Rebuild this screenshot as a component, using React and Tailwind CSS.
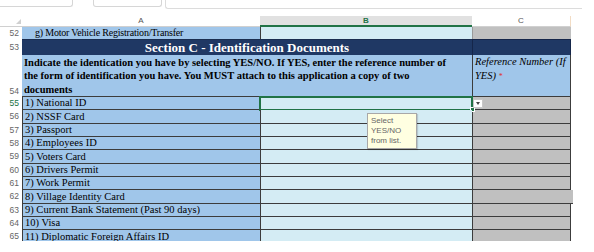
import React from 'react';

const serif = "font-['Liberation_Serif',serif]";
const sans = "font-['Liberation_Sans',sans-serif]";

const idRows = [
    { n: 55, label: '1) National ID', selected: true },
    { n: 56, label: '2) NSSF Card' },
    { n: 57, label: '3) Passport' },
    { n: 58, label: '4) Employees ID' },
    { n: 59, label: '5) Voters Card' },
    { n: 60, label: '6) Drivers Permit' },
    { n: 61, label: '7) Work Permit' },
    { n: 62, label: '8) Village Identity Card', open: true },
    { n: 63, label: '9) Current Bank Statement (Past 90 days)' },
    { n: 64, label: '10) Visa' },
    { n: 65, label: '11) Diplomatic Foreign Affairs ID' },
];

const RowNum = ({ n, green, align = 'items-center' }) => (
    <div className={`w-[22px] shrink-0 flex ${align} justify-end pr-[3px] text-[8.5px] leading-[11px] ${sans} ${green ? 'text-[#217346]' : 'text-[#666]'}`}>
        {n}
    </div>
);

const App = () => {
    return (
        <div className="w-[594px] h-[252px] bg-white overflow-hidden relative">
            {/* formula bar remnants */}
            <div className="h-[16px] flex items-start">
                <div className="w-[73px] h-[7px] border-b border-r border-[#d6d6d6] rounded-br-[3px]"></div>
                <div className="ml-[20px] w-[69px] h-[7px] border-b border-l border-r border-[#d6d6d6] rounded-b-[3px]"></div>
                <div className="ml-[3px] w-[417px] h-[9px] border-b border-l border-[#dcdcdc] rounded-bl-[3px]"></div>
            </div>

            {/* column headers */}
            <div className={`h-[11px] flex text-[8px] leading-[10px] ${sans}`}>
                <div className="w-[22px] shrink-0 relative border-b border-[#d0d0d0]">
                    <div className="absolute right-[1px] bottom-[2px] w-0 h-0 border-l-[5px] border-l-transparent border-b-[5px] border-b-[#d0d0d0]"></div>
                </div>
                <div className="w-[238px] shrink-0 text-center text-[#555] border-b border-[#d0d0d0]">A</div>
                <div className="w-[212px] shrink-0 text-center text-[#217346] font-bold bg-[#e1e1e1] border-b-2 border-[#217346]">B</div>
                <div className="w-[99px] shrink-0 text-center text-[#555] border-b border-r border-[#d0d0d0] border-r-[#f2dcc4]">C</div>
            </div>

            <div className={`h-[214px] overflow-hidden text-[10.5px] text-black ${serif}`}>
                {/* row 52 */}
                <div className="h-[12px] flex">
                    <RowNum n={52} />
                    <div className="w-[238px] shrink-0 bg-[#a0c6ea] pl-[13px] text-[10px] tracking-[-0.2px] leading-[12px] whitespace-nowrap">g) Motor Vehicle Registration/Transfer</div>
                    <div className="w-[212px] shrink-0 bg-[#d4ecf4] border-l border-[#3c3c3c]"></div>
                    <div className="w-[99px] shrink-0 bg-[#c0c0c0] border-l border-[#9a9a9a]"></div>
                </div>

                {/* row 53 */}
                <div className="h-[16px] flex">
                    <RowNum n={53} />
                    <div className="w-[450px] shrink-0 bg-[#1f3864] text-white font-bold text-[13px] leading-[15px] text-center border-t border-[#1a2d50]">
                        Section C - Identification Documents
                    </div>
                    <div className="w-[99px] shrink-0 bg-[#1f3864] border-l border-t border-r border-[#15264a]"></div>
                </div>

                {/* row 54 */}
                <div className="h-[42px] flex">
                    <RowNum n={54} align="items-end" />
                    <div className="w-[450px] shrink-0 bg-[#a0c6ea] border-b border-[#3c3c3c] flex items-end pl-[2px] font-bold leading-[13.5px] whitespace-nowrap">
                        <div>
                            Indicate the identication you have by selecting YES/NO. If YES, enter the reference number of<br />
                            the form of identification you have. You MUST attach to this application a copy of two<br />
                            documents
                        </div>
                    </div>
                    <div className="w-[99px] shrink-0 bg-[#a0c6ea] border-l border-r border-b border-[#3c3c3c] pl-[2px] italic leading-[13.5px]">
                        Reference Number (If<br />
                        YES) <span className="text-[#e03030] not-italic text-[8px]">*</span>
                    </div>
                </div>

                {/* rows 55-65 */}
                {idRows.map(row => (
                    <div key={row.n} className="h-[13.333px] flex">
                        <RowNum n={row.n} green={row.selected} />
                        <div className="w-[238px] shrink-0 bg-[#a0c6ea] border-l border-b border-[#3c3c3c] pl-[2px] flex items-end leading-[12px] whitespace-nowrap">
                            {row.label}
                        </div>
                        <div className={`w-[212px] shrink-0 bg-[#d4ecf4] border-l border-b border-[#3c3c3c] relative ${row.selected ? 'outline-2 outline-[#217346] -outline-offset-1' : ''}`}>
                            {row.selected && (
                                <>
                                    <div className="absolute right-[-3px] bottom-[-3px] w-[5px] h-[5px] bg-[#217346] border border-white"></div>
                                    <div className="absolute left-[212px] top-[2px] w-[10px] h-[9px] bg-white border border-[#c8c8c8] flex items-center justify-center z-10">
                                        <div className="w-0 h-0 border-l-[2.5px] border-r-[2.5px] border-t-[3px] border-l-transparent border-r-transparent border-t-[#444]"></div>
                                    </div>
                                </>
                            )}
                        </div>
                        <div className={`shrink-0 bg-[#c0c0c0] border-l border-b border-[#3c3c3c] ${row.open ? 'w-[101px]' : 'w-[99px] border-r'}`}></div>
                    </div>
                ))}
            </div>

            {/* data validation input message */}
            <div className={`absolute left-[367px] top-[113px] w-[50px] h-[36px] bg-[#ffffe1] border border-[#a8a8a8] shadow-[1px_1px_1px_rgba(0,0,0,0.15)] pl-[3px] pt-[2px] text-[8px] leading-[9.8px] text-[#666] ${sans}`}>
                <div>Select</div>
                <div>YES/NO</div>
                <div>from list.</div>
            </div>
        </div>
    );
};

export default App;
